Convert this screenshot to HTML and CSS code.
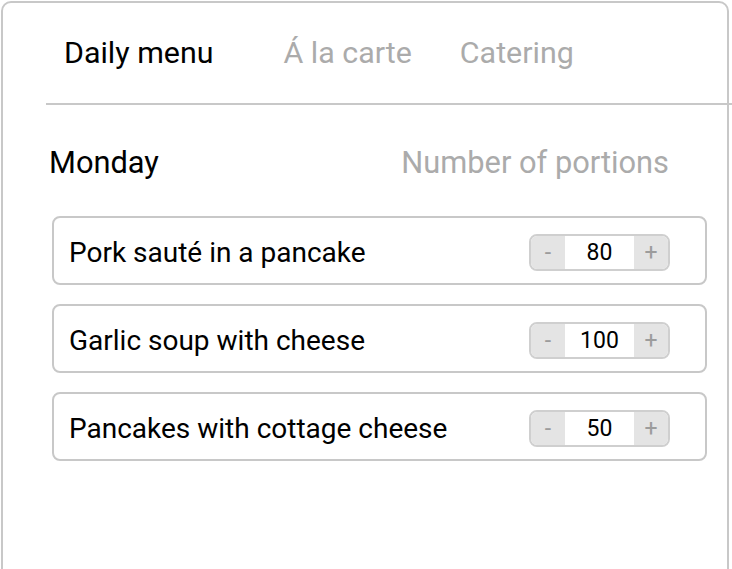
FILE: index.html
```html
<!DOCTYPE html>
<html lang="en">
<head>
<meta charset="utf-8">
<title>Menu</title>
<link rel="stylesheet" href="styles.css">
</head>
<body>
<div class="card">
  <nav class="tabs">
    <span class="tab tab-active">Daily menu</span>
    <span class="tab tab-second">Á la carte</span>
    <span class="tab">Catering</span>
  </nav>
  <div class="divider"></div>
  <section class="content">
    <div class="header">
      <span class="day">Monday</span>
      <span class="portions">Number of portions</span>
    </div>
    <div class="rows">
      <div class="row">
        <span class="dish">Pork sauté in a pancake</span>
        <div class="stepper"><span class="btn">-</span><span class="qty">80</span><span class="btn">+</span></div>
      </div>
      <div class="row">
        <span class="dish">Garlic soup with cheese</span>
        <div class="stepper"><span class="btn">-</span><span class="qty">100</span><span class="btn">+</span></div>
      </div>
      <div class="row">
        <span class="dish">Pancakes with cottage cheese</span>
        <div class="stepper"><span class="btn">-</span><span class="qty">50</span><span class="btn">+</span></div>
      </div>
    </div>
  </section>
</div>
</body>
</html>
```
FILE: styles.css
```css
html, body {
  margin: 0;
  padding: 0;
  background: #fff;
  overflow: hidden;
}
body {
  font-family: Roboto, "Liberation Sans", sans-serif;
  color: #000;
  padding: 1px 0 0 1px;
}
.card {
  box-sizing: border-box;
  width: 728px;
  height: 620px;
  border: 2px solid #c8c8c8;
  border-radius: 10px;
  background: #fff;
}
.tabs {
  display: flex;
  padding: 33px 0 0 61px;
  height: 33px;
  margin-bottom: 34px;
  font-size: 30.4px;
  line-height: 33px;
}
.tab {
  color: #ababab;
  white-space: nowrap;
}
.tab-active {
  color: #000;
}
.tab-second {
  margin-left: 70px;
  margin-right: 48px;
}
.divider {
  height: 2px;
  background: #c8c8c8;
  margin-left: 43px;
  margin-right: -5px;
}
.content {
  padding: 0 20px 0 49px;
}
.header {
  display: flex;
  justify-content: space-between;
  margin: 41px 38px 0 -3px;
  font-size: 30.8px;
  line-height: 33px;
}
.portions {
  color: #ababab;
  white-space: nowrap;
}
.rows {
  display: flex;
  flex-direction: column;
  gap: 19px;
  margin-top: 37px;
}
.row {
  box-sizing: border-box;
  height: 69px;
  border: 2px solid #c8c8c8;
  border-radius: 8px;
  display: flex;
  align-items: center;
  justify-content: space-between;
  padding: 3px 36px 0 15px;
}
.dish {
  font-size: 28px;
  white-space: nowrap;
}
.stepper {
  box-sizing: border-box;
  width: 141px;
  height: 37px;
  border: 2px solid #cfcfcf;
  border-radius: 8px;
  overflow: hidden;
  display: flex;
  margin-top: 1px;
  margin-right: -1px;
}
.btn {
  width: 34px;
  background: #e4e4e4;
  color: #9c9c9c;
  font-size: 23px;
  display: flex;
  align-items: center;
  justify-content: center;
}
.qty {
  flex: 1;
  display: flex;
  align-items: center;
  justify-content: center;
  font-size: 23px;
  color: #000;
}
```
